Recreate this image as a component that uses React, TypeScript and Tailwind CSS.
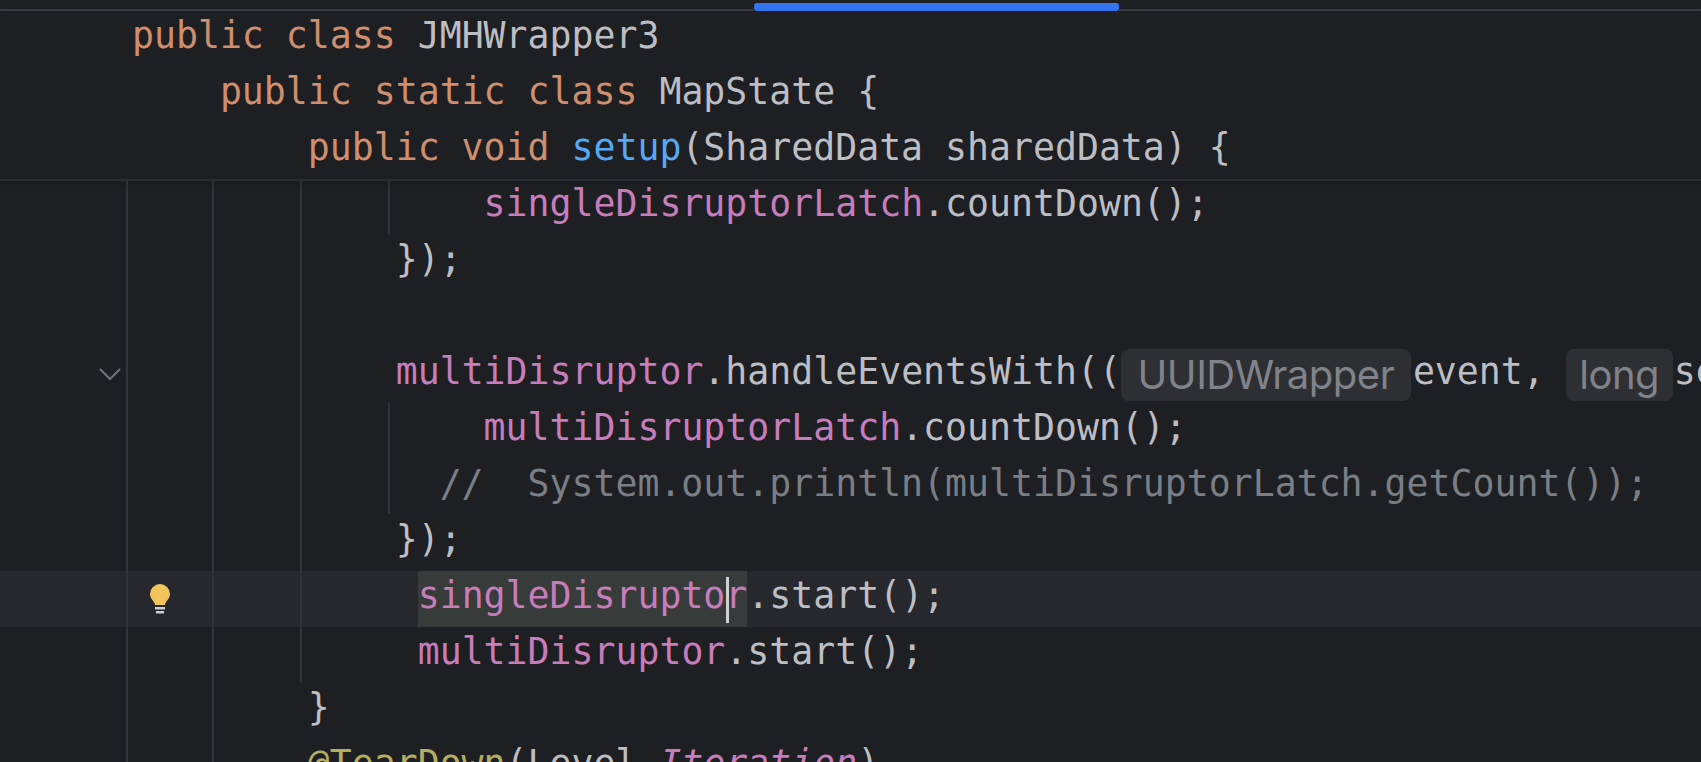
const KEYWORD = "text-[#cf8e6d]";
const PLAIN = "text-[#bcbec4]";
const METHOD = "text-[#56a8f5]";
const FIELD = "text-[#c77dbb]";
const COMMENT = "text-[#7a7e85]";
const ANNOTATION = "text-[#b3ae60]";

type Token = [string, string];

const HEADER: Token[][] = [
    [[KEYWORD, "public class "], [PLAIN, "JMHWrapper3"]],
    [[KEYWORD, "    public static class "], [PLAIN, "MapState {"]],
    [[KEYWORD, "        public void "], [METHOD, "setup"], [PLAIN, "(SharedData sharedData) {"]],
];

const GUIDES = [
    "left-[126px] top-0 h-[583px]",
    "left-[212px] top-0 h-[583px]",
    "left-[300px] top-0 h-[504px]",
    "left-[388px] top-0 h-[56px]",
    "left-[388px] top-[224px] h-[111px]",
];

function Code({ tokens }: { tokens: Token[] }) {
    return (
        <>
            {tokens.map(([color, text], i) => (
                <span key={i} className={`${color} whitespace-pre`}>{text}</span>
            ))}
        </>
    );
}

function Row({ tokens, children }: { tokens?: Token[]; children?: React.ReactNode }) {
    return (
        <div className="flex h-14 items-start pl-[132px] leading-[50px]">
            {tokens && <Code tokens={tokens} />}
            {children}
        </div>
    );
}

function Hint({ text, className }: { text: string; className: string }) {
    return (
        <span className={`mt-[2px] flex h-[52px] shrink-0 items-center justify-center rounded-lg bg-[#2e2f33] font-['Inter',sans-serif] text-[40px] leading-[52px] tracking-[-0.5px] text-[#808389] ${className}`}>
            {text}
        </span>
    );
}

function Bulb() {
    return (
        <svg width="20" height="30" viewBox="0 0 20 30" className="absolute left-[150px] top-[13px]">
            <path d="M10 0a10 10 0 0 1 10 10c0 4-3 6-4.500 9-.4 1-.5 2-.5 2H5s-.1-1-.5-2C3 16 0 14 0 10A10 10 0 0 1 10 0z" fill="#f2c55c" />
            <rect x="5" y="23" width="10" height="2.500" fill="#ced0d6" />
            <rect x="6" y="27" width="8" height="2.500" fill="#ced0d6" />
        </svg>
    );
}

export default function App() {
    return (
        <div className="h-[762px] w-[1701px] overflow-hidden bg-[#1e1f22] font-['DejaVu_Sans_Mono',monospace] text-[36.5px]">
            <div className="flex h-[11px] items-end">
                <div className="h-[2px] w-[754px] bg-[#393b40]" />
                <div className="h-2 w-[365px] rounded-[3px] bg-[#3574f0]" />
                <div className="h-[2px] flex-1 bg-[#393b40]" />
            </div>

            <div className="relative z-10 bg-[#1e1f22] shadow-[0_2px_0_#2b2d30,0_5px_8px_rgba(0,0,0,0.12)]">
                {HEADER.map((tokens, i) => <Row key={i} tokens={tokens} />)}
            </div>

            <div className="relative">
                {GUIDES.map((g) => (
                    <div key={g} className={`absolute z-[1] w-[2px] bg-[#313438] ${g}`} />
                ))}

                <Row tokens={[[PLAIN, "                "], [FIELD, "singleDisruptorLatch"], [PLAIN, ".countDown();"]]} />
                <Row tokens={[[PLAIN, "            });"]]} />
                <Row />
                <div className="relative">
                    <svg width="22" height="13" viewBox="0 0 22 13" fill="none" className="absolute left-[99px] top-[21px]">
                        <path d="M1 1l10 10L21 1" stroke="#6f737a" strokeWidth="2" />
                    </svg>
                    <Row>
                        <Code tokens={[[PLAIN, "            "], [FIELD, "multiDisruptor"], [PLAIN, ".handleEventsWith(("]]} />
                        <Hint text="UUIDWrapper" className="mr-[2px] w-[290px]" />
                        <Code tokens={[[PLAIN, "event, "]]} />
                        <Hint text="long" className="-ml-[1px] mr-[1px] w-[107px]" />
                        <Code tokens={[[PLAIN, "sequence, endOfBatch) -> {"]]} />
                    </Row>
                </div>
                <Row tokens={[[PLAIN, "                "], [FIELD, "multiDisruptorLatch"], [PLAIN, ".countDown();"]]} />
                <Row tokens={[[COMMENT, "              //  System.out.println(multiDisruptorLatch.getCount());"]]} />
                <Row tokens={[[PLAIN, "            });"]]} />

                <div className="relative bg-[#26282e]">
                    <Bulb />
                    <Row>
                        <span className="whitespace-pre">{"             "}</span>
                        <span className="relative h-14 whitespace-pre bg-[#373b39] text-[#c77dbb]">
                            singleDisruptor
                            <span className="absolute left-[308px] top-[6px] h-[46px] w-[3px] bg-[#ced0d6]" />
                        </span>
                        <Code tokens={[[PLAIN, ".start();"]]} />
                    </Row>
                </div>

                <Row tokens={[[PLAIN, "             "], [FIELD, "multiDisruptor"], [PLAIN, ".start();"]]} />
                <Row tokens={[[PLAIN, "        }"]]} />
                <Row>
                    <Code tokens={[[ANNOTATION, "        @TearDown"], [PLAIN, "(Level."]]} />
                    <span className="whitespace-pre italic text-[#c77dbb]">Iteration</span>
                    <Code tokens={[[PLAIN, ")"]]} />
                </Row>
            </div>
        </div>
    );
}
